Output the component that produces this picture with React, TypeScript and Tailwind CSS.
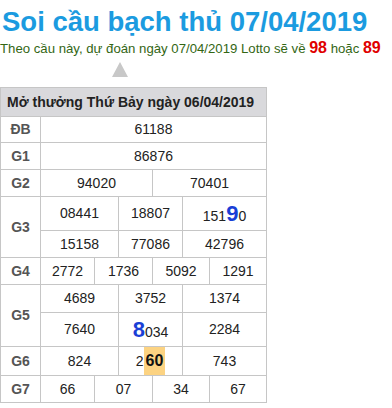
import React from "react";

const B = "border-[#c6c6c6]";

function Cell({ w, children }: { w: string; children: React.ReactNode }) {
  return (
    <div className={`${w} h-full border-r border-b ${B} flex items-center justify-center text-[14px] text-[#222]`}>
      <span>{children}</span>
    </div>
  );
}

function Label({ h, children }: { h: string; children: React.ReactNode }) {
  return (
    <div className={`w-[40px] ${h} shrink-0 border-r border-b ${B} flex items-center justify-center text-[14px] font-bold text-[#555]`}>
      {children}
    </div>
  );
}

const W3 = ["w-[78px]", "w-[64px]", "w-[84px]"];
const W4 = ["w-[54px]", "w-[58px]", "w-[57px]", "w-[57px]"];

function Row3({ h, items }: { h: string; items: React.ReactNode[] }) {
  return (
    <div className={`flex ${h}`}>
      {items.map((it, i) => (
        <Cell key={i} w={W3[i]}>
          {it}
        </Cell>
      ))}
    </div>
  );
}

function Row4({ h, label, items }: { h: string; label: string; items: string[] }) {
  return (
    <div className={`flex ${h}`}>
      <Label h="h-full">{label}</Label>
      {items.map((it, i) => (
        <Cell key={i} w={W4[i]}>
          {it}
        </Cell>
      ))}
    </div>
  );
}

const Big = ({ children }: { children: React.ReactNode }) => (
  <span className="text-[22px] font-bold text-[#1a3fd6]">{children}</span>
);

export default function App() {
  return (
    <div className="w-[392px] h-[408px] bg-white font-['Liberation_Sans',Arial,sans-serif]">
      <div className="h-[38px] pt-[8px] pl-[2px] text-[27.5px] leading-[28px] font-bold text-[#1b9be0] whitespace-nowrap">
        Soi cầu bạch thủ 07/04/2019
      </div>
      <div className="h-[21px] text-[13.2px] leading-[20px] text-[#336614] whitespace-nowrap">
        Theo cầu này, dự đoán ngày 07/04/2019 Lotto sẽ về{" "}
        <span className="text-[16px] font-bold text-[#e00000]">98</span> hoặc{" "}
        <span className="text-[16px] font-bold text-[#e00000]">89</span>
      </div>
      <div className="mt-[3px] ml-[112px] w-[16px] h-[15px]">
        <svg width="16" height="15" viewBox="0 0 16 15">
          <polygon points="8,0 16,15 0,15" fill="#c8c8c8" />
        </svg>
      </div>
      <div className={`mt-[10px] w-[267px] border-l border-t ${B}`}>
        <div className={`h-[29px] border-r border-b ${B} bg-[#d9d9dc] flex items-center pl-[6px] text-[14px] font-bold text-[#222] whitespace-nowrap`}>
          Mở thưởng Thứ Bảy ngày 06/04/2019
        </div>
        <div className="flex h-[26px]">
          <Label h="h-full">ĐB</Label>
          <Cell w="w-[226px]">61188</Cell>
        </div>
        <div className="flex h-[27px]">
          <Label h="h-full">G1</Label>
          <Cell w="w-[226px]">86876</Cell>
        </div>
        <div className="flex h-[27px]">
          <Label h="h-full">G2</Label>
          <Cell w="w-[112px]">94020</Cell>
          <Cell w="w-[114px]">70401</Cell>
        </div>
        <div className="flex h-[61px]">
          <Label h="h-full">G3</Label>
          <div className="flex flex-col">
            <Row3
              h="h-[34px]"
              items={[
                "08441",
                "18807",
                <>
                  151<Big>9</Big>0
                </>,
              ]}
            />
            <Row3 h="h-[27px]" items={["15158", "77086", "42796"]} />
          </div>
        </div>
        <Row4 h="h-[27px]" label="G4" items={["2772", "1736", "5092", "1291"]} />
        <div className="flex h-[62px]">
          <Label h="h-full">G5</Label>
          <div className="flex flex-col">
            <Row3 h="h-[28px]" items={["4689", "3752", "1374"]} />
            <Row3
              h="h-[34px]"
              items={[
                "7640",
                <>
                  <Big>8</Big>034
                </>,
                "2284",
              ]}
            />
          </div>
        </div>
        <div className="flex h-[29px]">
          <Label h="h-full">G6</Label>
          <Cell w={W3[0]}>824</Cell>
          <div className={`${W3[1]} h-full border-r border-b ${B} flex items-stretch justify-center text-[14px] text-[#222]`}>
            <span className="flex items-center">2</span>
            <span className="flex items-center bg-[#fcd382] px-[2px] text-[16px] font-bold text-[#111]">60</span>
          </div>
          <Cell w={W3[2]}>743</Cell>
        </div>
        <Row4 h="h-[27px]" label="G7" items={["66", "07", "34", "67"]} />
      </div>
    </div>
  );
}
